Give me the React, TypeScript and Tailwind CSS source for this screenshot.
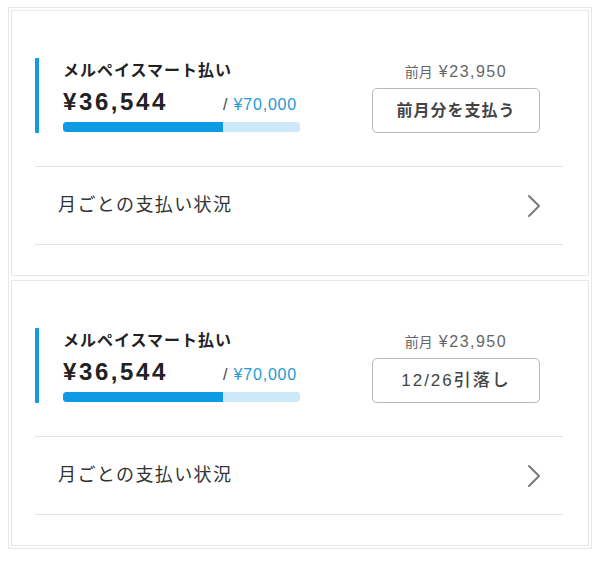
import React from "react";

const font = {
  fontFamily: '"Liberation Sans", "Noto Sans CJK JP", sans-serif',
};

function Card({ buttonLabel, bold }: { buttonLabel: string; bold: boolean }) {
  return (
    <div className="border border-[#e8e8e8] bg-white h-[266px] pl-[23px] pr-[25px]">
      <div className="flex items-end justify-between pt-[47px] pb-[33px] border-b border-[#e3e3e3]">
        <div className="w-[265px] border-l-4 border-[#139be0] rounded-[1px] pl-[24px] pt-[3px] pb-[1px]">
          <div className="text-[16px] leading-[20px] font-bold tracking-[1px] text-[#222]">
            メルペイスマート払い
          </div>
          <div className="flex items-baseline justify-between pr-[3px] mt-[7px]">
            <span className="text-[24px] leading-[28px] font-bold tracking-[2.6px] text-[#222]">
              ¥36,544
            </span>
            <span className="text-[16px] leading-[20px] tracking-[0.8px]">
              <span className="text-[#444]">/ </span>
              <span className="text-[#2499d6]">¥70,000</span>
            </span>
          </div>
          <div className="mt-[6px] h-[10px] w-[237px] rounded-[3px] bg-[#cde9f9] overflow-hidden">
            <div className="h-full w-[160px] bg-[#0f9be4] rounded-l-[3px]" />
          </div>
        </div>
        <div className="flex flex-col items-center mr-[23px]">
          <div className="leading-[20px] text-[#666] whitespace-nowrap">
            <span className="text-[14px]">前月</span>
            <span className="text-[16px] tracking-[1.5px] ml-[6px]">¥23,950</span>
          </div>
          <button
            className={
              bold
                ? "mt-[6px] w-[168px] h-[45px] border border-[#b8b8b8] rounded-[5px] bg-white text-[16px] font-bold tracking-[1px] text-[#444] flex items-center justify-center"
                : "mt-[6px] w-[168px] h-[45px] border border-[#b8b8b8] rounded-[5px] bg-white text-[17px] font-medium tracking-[2px] text-[#444] flex items-center justify-center"
            }
            style={font}
          >
            {buttonLabel}
          </button>
        </div>
      </div>
      <div className="h-[78px] flex items-center justify-between pl-[23px] pr-[22px] border-b border-[#e3e3e3]">
        <span className="text-[18px] tracking-[1.4px] text-[#333]">月ごとの支払い状況</span>
        <svg width="14" height="24" viewBox="0 0 14 24" fill="none">
          <path d="M2 2 L12 12 L2 22" stroke="#7a7a7a" strokeWidth="2" strokeLinecap="round" strokeLinejoin="round" />
        </svg>
      </div>
    </div>
  );
}

export default function App() {
  return (
    <div className="w-[600px] h-[561px] bg-white pt-[7px] px-[8px]" style={font}>
      <div className="border border-[#e6e6e6] p-[2px] flex flex-col gap-[4px]">
        <Card buttonLabel="前月分を支払う" bold={true} />
        <Card buttonLabel="12/26引落し" bold={false} />
      </div>
    </div>
  );
}
